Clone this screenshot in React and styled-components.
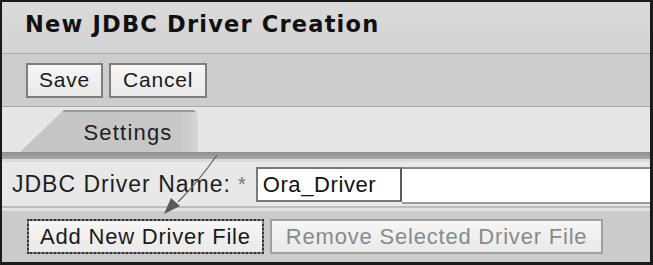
import styled, { createGlobalStyle } from 'styled-components';

const GlobalStyle = createGlobalStyle`
  html, body {
    margin: 0;
    padding: 0;
    background: #ffffff;
  }
  body {
    font-family: 'Liberation Sans', Arial, sans-serif;
  }
`;

const Frame = styled.div`
  position: relative;
  width: 653px;
  height: 265px;
  box-sizing: border-box;
  border: 2px solid #1a1a1a;
  border-right-width: 3px;
  border-bottom-width: 3px;
  display: flex;
  flex-direction: column;
  overflow: hidden;
  background: #e8e8e8;
`;

const Header = styled.div`
  height: 52px;
  flex: none;
  display: flex;
  align-items: center;
  padding: 0 0 7px 23px;
  box-sizing: border-box;
  background: linear-gradient(#dadada, #d3d3d3);
  border-bottom: 1px solid #a9a9a9;
`;

const Title = styled.h1`
  margin: 0;
  font-family: 'DejaVu Sans', Verdana, sans-serif;
  font-weight: bold;
  font-size: 22.5px;
  letter-spacing: 1.2px;
  color: #111;
`;

const Toolbar = styled.div`
  height: 53px;
  flex: none;
  display: flex;
  align-items: center;
  gap: 6px;
  padding: 0 0 0 24px;
  box-sizing: border-box;
  background: #cdcdcd;
  border-bottom: 1px solid #a8a8a8;
`;

const Button = styled.button`
  height: ${(p) => p.h || 35}px;
  padding: 0 ${(p) => p.pad || 12}px;
  box-sizing: border-box;
  font-family: 'Liberation Sans', Arial, sans-serif;
  font-size: ${(p) => p.fs || 21}px;
  letter-spacing: ${(p) => p.ls || 0.8}px;
  color: ${(p) => (p.disabled ? '#8a8a8a' : '#1a1a1a')};
  background: linear-gradient(#f6f6f6, #e9e9e9);
  border: 2px solid #7e7e7e;
  border-color: ${(p) => (p.disabled ? '#a0a0a0' : '#7e7e7e')};
  outline: ${(p) => (p.focused ? '2px dotted #333' : 'none')};
  outline-offset: -2px;
  border-radius: 0;
  cursor: default;
`;

const TabStrip = styled.div`
  height: 45px;
  flex: none;
  display: flex;
  align-items: flex-end;
  padding-left: 18px;
  box-sizing: border-box;
  background: #e6e6e6;
`;

const Tab = styled.div`
  width: 178px;
  height: 42px;
  display: flex;
  align-items: center;
  justify-content: center;
  padding-left: 38px;
  padding-top: 2px;
  box-sizing: border-box;
  background: linear-gradient(90deg, #c4c4c4 0%, #c8c8c8 90%, #d6d6d6 100%);
  clip-path: polygon(0 100%, 44px 0, calc(100% - 4px) 0, 100% 4px, 100% 100%);
  border-top: 2px solid #9c9c9c;
  font-size: 22px;
  letter-spacing: 1.2px;
  color: #1e1e1e;
`;

const TabBar = styled.div`
  height: 7px;
  flex: none;
  background: linear-gradient(#8f8f8f, #a8a8a8);
  border-bottom: 3px solid #dadada;
`;

const FormRow = styled.div`
  height: 46px;
  flex: none;
  display: flex;
  align-items: center;
  padding-left: 10px;
  box-sizing: border-box;
  background: #e8e8e8;
  border-bottom: 2px solid #bdbdbd;
`;

const Label = styled.span`
  font-size: 23px;
  letter-spacing: 1px;
  color: #1e1e1e;
`;

const Required = styled.span`
  font-size: 20px;
  color: #777;
  margin: 0 10px 0 7px;
`;

const Input = styled.div`
  width: 146px;
  height: 35px;
  box-sizing: border-box;
  padding: 2px 5px 0;
  display: flex;
  align-items: center;
  background: #fff;
  border: 2px solid #7a7a7a;
  border-right-color: #5a5a5a;
  font-size: 22px;
  letter-spacing: 0.6px;
  color: #111;
`;

const WideInput = styled.div`
  flex: 1;
  height: 33px;
  margin-top: 2px;
  background: #fff;
  border-top: 2px solid #8a8a8a;
  border-bottom: 2px solid #9a9a9a;
`;

const ButtonBar = styled.div`
  flex: 1;
  display: flex;
  align-items: center;
  gap: 6px;
  padding: 0 0 0 25px;
  box-sizing: border-box;
  background: #cbcbcb;
  border-top: 3px solid #e2e2e2;
`;

const Pointer = styled.svg`
  position: absolute;
  left: 150px;
  top: 150px;
  pointer-events: none;
`;

export default function App() {
  return (
    <>
      <GlobalStyle />
      <Frame>
        <Header>
          <Title>New JDBC Driver Creation</Title>
        </Header>
        <Toolbar>
          <Button pad={11}>Save</Button>
          <Button pad={12}>Cancel</Button>
        </Toolbar>
        <TabStrip>
          <Tab>Settings</Tab>
        </TabStrip>
        <TabBar />
        <FormRow>
          <Label>JDBC Driver Name:</Label>
          <Required>*</Required>
          <Input>Ora_Driver</Input>
          <WideInput />
        </FormRow>
        <ButtonBar>
          <Button h={35} pad={11} fs={22} ls={0.8} focused>
            Add New Driver File
          </Button>
          <Button h={35} pad={14} fs={22} ls={0.8} disabled>
            Remove Selected Driver File
          </Button>
        </ButtonBar>
        <Pointer width="80" height="70" viewBox="0 0 80 70">
          <path d="M65 3 C56 16 42 34 26 50" stroke="#606060" strokeWidth="1.2" fill="none" />
          <polygon points="12,62 19,46 28,54" fill="#5a5a5a" />
        </Pointer>
      </Frame>
    </>
  );
}
